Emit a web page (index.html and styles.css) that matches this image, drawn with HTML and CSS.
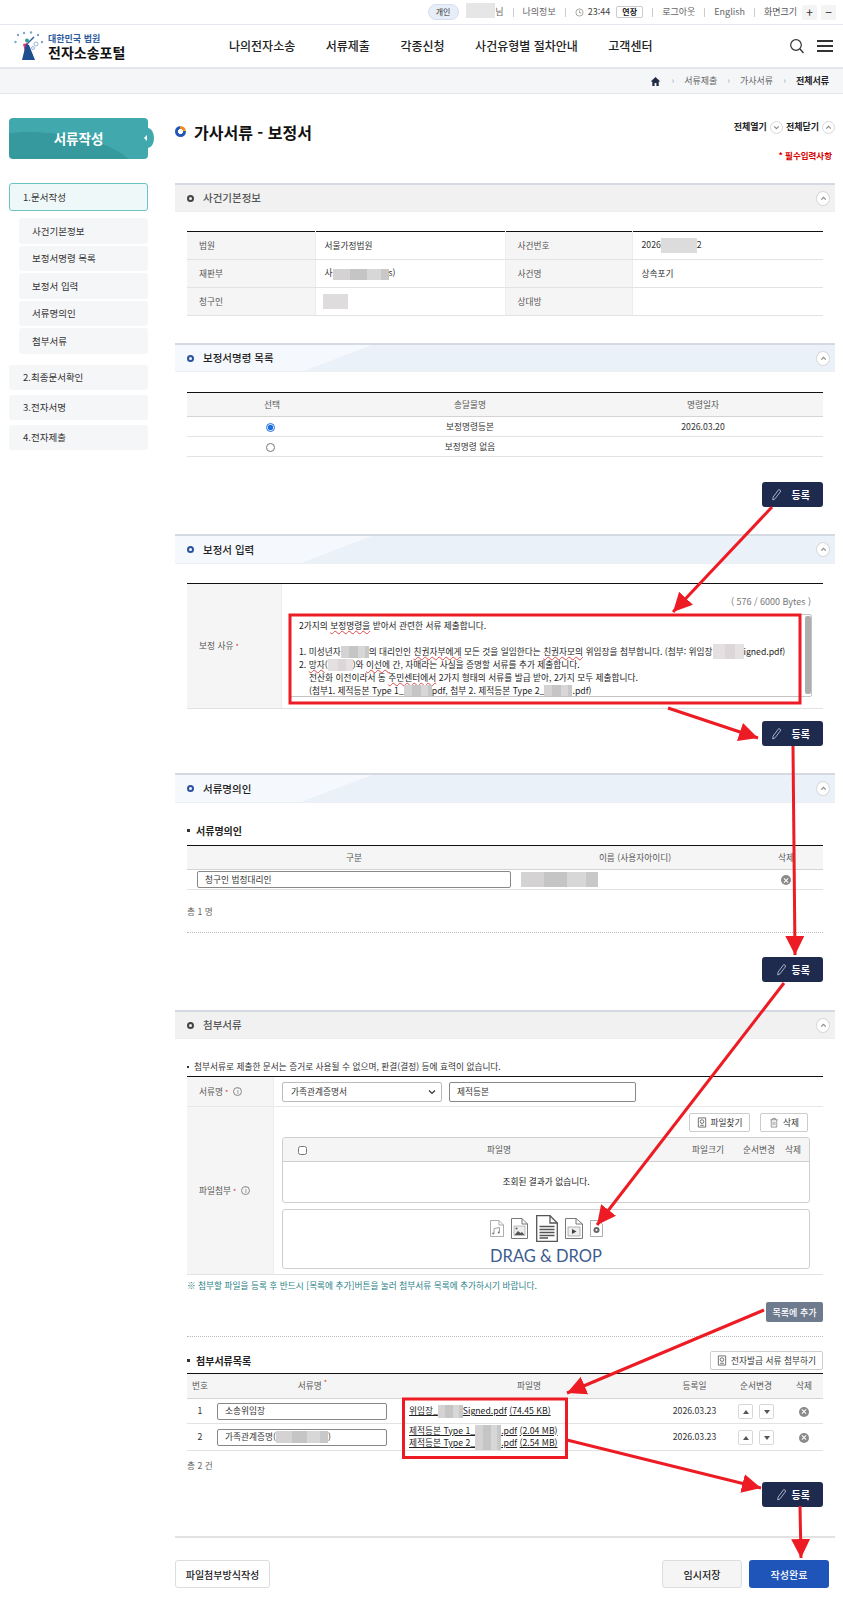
FILE: index.html
```html
<!DOCTYPE html>
<html lang="ko">
<head>
<meta charset="utf-8">
<title>전자소송포털 - 보정서</title>
<link rel="stylesheet" href="styles.css">
</head>
<body>
<div class="topbar">
  <span class="pill">개인</span>
  <span class="blur b-user"></span><span class="nim">님</span>
  <i class="sep"></i><span>나의정보</span><i class="sep"></i>
  <svg class="clock" viewBox="0 0 10 10"><circle cx="5" cy="5" r="4" fill="none" stroke="#888" stroke-width=".8"/><path d="M5 2.6V5.4H7" fill="none" stroke="#888" stroke-width=".8"/></svg>
  <span class="time">23:44</span><span class="extend">연장</span><i class="sep"></i>
  <span>로그아웃</span><i class="sep"></i><span class="eng">English</span><i class="sep"></i>
  <span class="zoomlabel">화면크기</span><span class="zoombtn first">+</span><span class="zoombtn">−</span>
</div>
<header class="header">
  <div class="logo">
    <svg class="logo-mark" viewBox="0 0 30 30">
      <g fill="#7fa6cf"><circle cx="4" cy="4" r="1.2"/><circle cx="10" cy="2" r="1.2"/><circle cx="17" cy="1.5" r="1.2"/><circle cx="24" cy="4" r="1.2"/><circle cx="1.5" cy="11" r="1.2"/><circle cx="28" cy="11" r="1.2"/></g>
      <path d="M20 6 12 14" stroke="#2f5f9e" stroke-width="1.4"/>
      <circle cx="13" cy="9.5" r="2" fill="#2fa08a"/>
      <path d="M9 13 14 12 14 20 11 21Z" fill="#d83a7c"/>
      <path d="M12 13 15 14 21 29H8Z" fill="#1d4f8f"/>
      <g fill="none" stroke="#8fb0d4" stroke-width=".9"><circle cx="22" cy="13" r="2"/><circle cx="19" cy="17" r="1.5"/></g>
    </svg>
    <div class="logo-text"><span class="logo-small">대한민국 법원</span><strong>전자소송포털</strong></div>
  </div>
  <nav class="nav"><a>나의전자소송</a><a>서류제출</a><a>각종신청</a><a>사건유형별 절차안내</a><a>고객센터</a></nav>
  <div class="header-tools">
    <svg class="search" viewBox="0 0 16 16"><circle cx="7" cy="7" r="5.3" fill="none" stroke="#333" stroke-width="1.2"/><path d="M11 11 14.5 15" stroke="#333" stroke-width="1.3"/></svg>
    <div class="burger"><i></i><i></i><i></i></div>
  </div>
</header>
<div class="crumb">
  <svg class="home" viewBox="0 0 12 12"><path d="M6 1 .8 6H2.5V11H5V7.6H7V11H9.5V6H11.2Z" fill="#1f2a44"/></svg>
  <span class="gt">›</span><span>서류제출</span><span class="gt">›</span><span>가사서류</span><span class="gt">›</span><strong>전체서류</strong>
</div>

<div class="layout">
  <aside class="sidebar">
    <div class="side-title">서류작성<i class="notch"></i></div>
    <a class="step step-on">1.문서작성</a>
    <div class="substeps"><a>사건기본정보</a><a>보정서명령 목록</a><a>보정서 입력</a><a>서류명의인</a><a>첨부서류</a></div>
    <a class="step step-first">2.최종문서확인</a>
    <a class="step">3.전자서명</a>
    <a class="step">4.전자제출</a>
  </aside>

  <main class="content">
    <div class="page-head">
      <div class="page-row">
        <h1><i class="ring"></i>가사서류 - 보정서</h1>
        <div class="all-tools">
          <span>전체열기</span><i class="round"><svg viewBox="0 0 8 8"><path d="M2 3 4 5 6 3" fill="none" stroke="#888"/></svg></i>
          <span>전체닫기</span><i class="round"><svg viewBox="0 0 8 8"><path d="M2 5 4 3 6 5" fill="none" stroke="#888"/></svg></i>
        </div>
      </div>
      <p class="required">* 필수입력사항</p>
    </div>

    <section>
      <div class="sec-head grey short"><i class="dot"></i><h2>사건기본정보</h2><i class="round sec-toggle"><svg viewBox="0 0 8 8"><path d="M2 5 4 3 6 5" fill="none" stroke="#888"/></svg></i></div>
      <div class="sec-body pad-19">
        <table class="tbl info">
          <colgroup><col class="c128"><col class="c190"><col class="c127"><col></colgroup>
          <tr><th>법원</th><td>서울가정법원</td><th>사건번호</th><td>2026<span class="blur b-36"></span>2</td></tr>
          <tr><th>재판부</th><td>사<span class="blur b-56"></span>s)</td><th>사건명</th><td>상속포기</td></tr>
          <tr><th>청구인</th><td><span class="blur b-claim"></span></td><th>상대방</th><td></td></tr>
        </table>
      </div>
    </section>

    <section class="gap-27">
      <div class="sec-head blue short"><i class="dot navy"></i><h2>보정서명령 목록</h2><i class="round sec-toggle"><svg viewBox="0 0 8 8"><path d="M2 5 4 3 6 5" fill="none" stroke="#888"/></svg></i></div>
      <div class="sec-body pad-20">
        <table class="tbl center orders">
          <colgroup><col class="c170"><col class="c226"><col></colgroup>
          <tr class="hd"><th>선택</th><th>송달물명</th><th>명령일자</th></tr>
          <tr><td><input class="radio" type="radio" name="o" checked></td><td>보정명령등본</td><td>2026.03.20</td></tr>
          <tr><td><input class="radio" type="radio" name="o"></td><td>보정명령 없음</td><td></td></tr>
        </table>
        <div class="act act-25"><button class="reg wide"><svg class="pen" viewBox="0 0 12 14"><path d="M8.5 1.5 10.8 3.2 4.5 11.6 2 13 2.2 9.9Z" fill="none" stroke="#c8cede" stroke-width=".9"/></svg>등록</button></div>
      </div>
    </section>

    <section class="gap-27">
      <div class="sec-head blue"><i class="dot navy"></i><h2>보정서 입력</h2><i class="round sec-toggle"><svg viewBox="0 0 8 8"><path d="M2 5 4 3 6 5" fill="none" stroke="#888"/></svg></i></div>
      <div class="sec-body pad-19">
        <div class="reason">
          <div class="reason-label">보정 사유<sup>*</sup></div>
          <div class="reason-body">
            <div class="bytes">( 576 / 6000 Bytes )</div>
            <div class="textarea">
              <p>2가지의 <u>보정명령을</u> 받아서 관련한 서류 제출합니다.</p>
              <p>&nbsp;</p>
              <p>1. 미성년자<span class="blur b-28"></span>의 대리인인 <u>친권자부에게</u> 모든 것을 일임한다는 <u>친권자모의</u> 위임장을 첨부합니다. (첨부: 위임장<span class="blur b-31 pale"></span>igned.pdf)</p>
              <p>2. <u>망자</u>(<span class="blur b-24 pale"></span>)와 <u>이선에</u> 간, 자매라는 사실을 증명할 서류를 추가 제출합니다.</p>
              <p class="indent">전산화 이전이라서 동 <u>주민센터에서</u> 2가지 형태의 서류를 발급 받아, 2가지 모두 제출합니다.</p>
              <p class="indent">(<u>첨부1.</u> <u>제적등본</u> Type 1_<span class="blur b-28"></span>pdf, 첨부 2. <u>제적등본</u> Type 2_<span class="blur b-28"></span>.pdf)</p>
              <i class="scroll"></i>
            </div>
          </div>
        </div>
        <div class="act act-12"><button class="reg wide"><svg class="pen" viewBox="0 0 12 14"><path d="M8.5 1.5 10.8 3.2 4.5 11.6 2 13 2.2 9.9Z" fill="none" stroke="#c8cede" stroke-width=".9"/></svg>등록</button></div>
      </div>
    </section>

    <section class="gap-27">
      <div class="sec-head blue"><i class="dot navy"></i><h2>서류명의인</h2><i class="round sec-toggle"><svg viewBox="0 0 8 8"><path d="M2 5 4 3 6 5" fill="none" stroke="#888"/></svg></i></div>
      <div class="sec-body">
        <h3 class="sub sub-owner"><i></i>서류명의인</h3>
        <table class="tbl center owners">
          <colgroup><col class="c334"><col class="c228"><col></colgroup>
          <tr class="hd"><th>구분</th><th>이름 (사용자아이디)</th><th>삭제</th></tr>
          <tr><td class="cell-field"><div class="field f-owner">청구인 법정대리인</div></td><td class="left-top"><span class="blur b-owner"></span></td><td><i class="del"></i></td></tr>
        </table>
        <p class="total t-owner">총 1 명</p>
        <div class="dots"></div>
        <div class="act act-24"><button class="reg"><svg class="pen" viewBox="0 0 12 14"><path d="M8.5 1.5 10.8 3.2 4.5 11.6 2 13 2.2 9.9Z" fill="none" stroke="#c8cede" stroke-width=".9"/></svg>등록</button></div>
      </div>
    </section>

    <section class="gap-28">
      <div class="sec-head grey short"><i class="dot"></i><h2>첨부서류</h2><i class="round sec-toggle"><svg viewBox="0 0 8 8"><path d="M2 5 4 3 6 5" fill="none" stroke="#888"/></svg></i></div>
      <div class="sec-body">
        <p class="note"><i></i>첨부서류로 제출한 문서는 증거로 사용될 수 없으며, 판결(결정) 등에 효력이 없습니다.</p>
        <div class="attach">
          <div class="a-row a-name">
            <div class="a-label">서류명<sup>*</sup><i class="info-i">i</i></div>
            <div class="a-cell">
              <div class="field f-select">가족관계증명서<svg viewBox="0 0 8 6"><path d="M1 1.5 4 4.5 7 1.5" fill="none" stroke="#333" stroke-width="1.2"/></svg></div>
              <div class="field f-doc">제적등본</div>
            </div>
          </div>
          <div class="a-row a-file">
            <div class="a-label">파일첨부<sup>*</sup><i class="info-i">i</i></div>
            <div class="a-files">
              <div class="file-btns">
                <button class="ghost b-find"><svg viewBox="0 0 10 12"><path d="M1 1H9V11H1Z" fill="none" stroke="#666"/><circle cx="5" cy="5" r="2" fill="none" stroke="#666"/><path d="M3 9H7" stroke="#666"/></svg>파일찾기</button>
                <button class="ghost b-del"><svg viewBox="0 0 10 12"><path d="M1 3H9M3.5 3V1.5H6.5V3M2 3V11H8V3M4 5V9M6 5V9" fill="none" stroke="#777" stroke-width=".8"/></svg>삭제</button>
              </div>
              <div class="file-list">
                <div class="file-head"><span><input class="check" type="checkbox"></span><span>파일명</span><span>파일크기</span><span>순서변경</span><span>삭제</span></div>
                <div class="file-empty">조회된 결과가 없습니다.</div>
              </div>
              <div class="drop">
                <svg class="drop-icons" viewBox="0 0 113 28">
                  <g fill="#fff" stroke="#999" stroke-width=".8">
                    <path d="M.5 5.5H9L13.5 10V21.5H.5Z"/>
                    <path d="M9 5.5V10H13.5" fill="none"/>
                  </g>
                  <path d="M4 18.5V13.5L9.5 12.5V17.5" fill="none" stroke="#777" stroke-width=".7"/>
                  <circle cx="3.2" cy="18.5" r="1" fill="#777"/><circle cx="8.7" cy="17.5" r="1" fill="#777"/>
                  <g fill="#fff" stroke="#777" stroke-width="1">
                    <path d="M21.5 3.5H32L37.5 9V23.5H21.5Z"/>
                    <path d="M32 3.5V9H37.5" fill="none"/>
                    <path d="M24 11H35V20.5H24Z" fill="#eee" stroke="#999" stroke-width=".6"/>
                  </g>
                  <path d="M24.5 20 28 16 30.5 18 32 17 34.5 20Z" fill="#555"/>
                  <circle cx="26.5" cy="13.5" r="1" fill="#555"/>
                  <g fill="#fff" stroke="#555" stroke-width="1.3">
                    <path d="M46.7 .7H60L67.3 8V26.3H46.7Z"/>
                    <path d="M60 .7V8H67.3" fill="none"/>
                  </g>
                  <path d="M49.5 11.5H64.5M49.5 14.5H64.5M49.5 17.5H64.5M49.5 20.5H64.5M49.5 23H58" stroke="#555" stroke-width="1.3"/>
                  <g fill="#fff" stroke="#777" stroke-width="1">
                    <path d="M75.5 3.5H86L92.5 9V23.5H75.5Z"/>
                    <path d="M86 3.5V9H92.5" fill="none"/>
                    <path d="M78 12H90V21H78Z" fill="#eee" stroke="#888" stroke-width=".6"/>
                  </g>
                  <path d="M82 14V19L86.5 16.5Z" fill="#444"/>
                  <g fill="#fff" stroke="#999" stroke-width=".8">
                    <path d="M100.5 5.5H108.5L112.5 9.5V21.5H100.5Z"/>
                  </g>
                  <circle cx="106.5" cy="15" r="3" fill="#666"/><circle cx="106.5" cy="15" r="1" fill="#fff"/>
                </svg>
                <div class="drag-text">DRAG &amp; DROP</div>
              </div>
            </div>
          </div>
        </div>
        <p class="teal-note">※ 첨부할 파일을 등록 후 반드시 [목록에 추가]버튼을 눌러 첨부서류 목록에 추가하시기 바랍니다.</p>
        <div class="act act-add"><button class="add">목록에 추가</button></div>
        <div class="dots d-14"></div>
        <div class="list-head">
          <h3 class="sub"><i></i>첨부서류목록</h3>
          <button class="ghost b-issue"><svg viewBox="0 0 10 12"><path d="M1 1H9V11H1Z" fill="none" stroke="#666"/><circle cx="5" cy="5" r="2" fill="none" stroke="#666"/><path d="M3 9H7" stroke="#666"/></svg>전자발급 서류 첨부하기</button>
        </div>
        <table class="tbl center docs">
          <colgroup><col class="c26"><col class="c183"><col class="c266"><col class="c65"><col class="c58"><col></colgroup>
          <tr class="hd"><th>번호</th><th class="pl16">서류명<sup>*</sup></th><th>파일명</th><th>등록일</th><th>순서변경</th><th>삭제</th></tr>
          <tr>
            <td>1</td>
            <td class="cell-doc"><div class="field f-list">소송위임장</div></td>
            <td class="files"><a>위임장_<span class="blur b-24"></span>Signed.pdf</a> <a>(74.45 KB)</a></td>
            <td>2026.03.23</td>
            <td><span class="order up"></span><span class="order down"></span></td>
            <td><i class="del"></i></td>
          </tr>
          <tr>
            <td>2</td>
            <td class="cell-doc"><div class="field f-list">가족관계증명(<span class="blur b-52"></span>)</div></td>
            <td class="files two"><div><a>제적등본 Type 1_<span class="blur b-26"></span>.pdf</a> <a>(2.04 MB)</a></div><div><a>제적등본 Type 2_<span class="blur b-26"></span>.pdf</a> <a>(2.54 MB)</a></div></td>
            <td>2026.03.23</td>
            <td><span class="order up"></span><span class="order down"></span></td>
            <td><i class="del"></i></td>
          </tr>
        </table>
        <p class="total t-docs">총 2 건</p>
        <div class="act act-last"><button class="reg"><svg class="pen" viewBox="0 0 12 14"><path d="M8.5 1.5 10.8 3.2 4.5 11.6 2 13 2.2 9.9Z" fill="none" stroke="#c8cede" stroke-width=".9"/></svg>등록</button></div>
      </div>
    </section>

    <div class="foot">
      <button class="foot-btn foot-file">파일첨부방식작성</button>
      <div class="foot-right">
        <button class="foot-btn foot-save">임시저장</button>
        <button class="foot-btn foot-done">작성완료</button>
      </div>
    </div>
  </main>
</div>

<svg class="marks" viewBox="0 0 843 1600">
  <defs>
    <marker id="head" markerUnits="userSpaceOnUse" markerWidth="22" markerHeight="20" refX="19" refY="9.5" orient="auto">
      <path d="M0 0 19 9.5 0 19Z" fill="#ed1c24"/>
    </marker>
  </defs>
  <g fill="none" stroke="#ed1c24" stroke-width="3">
    <rect x="290" y="615" width="510" height="88"/>
    <rect x="403.5" y="1399" width="163" height="58.5"/>
    <path d="M772 507 673 612" marker-end="url(#head)"/>
    <path d="M668 708 758 738" marker-end="url(#head)"/>
    <path d="M793 746 795 955" marker-end="url(#head)"/>
    <path d="M784 983 597 1225" marker-end="url(#head)"/>
    <path d="M764 1310 567 1393" marker-end="url(#head)"/>
    <path d="M567 1440 761 1488" marker-end="url(#head)"/>
    <path d="M800 1506 801 1558" marker-end="url(#head)"/>
  </g>
</svg>
</body>
</html>
```

FILE: styles.css
```css
* { box-sizing: border-box; }
html, body { margin: 0; padding: 0; }
body {
  position: relative;
  width: 843px;
  height: 1600px;
  overflow: hidden;
  background: #fff;
  color: #333;
  font-family: "Noto Sans CJK KR", "Noto Sans", sans-serif;
  font-size: 8.7px;
  line-height: 1.3;
}
a { color: inherit; }
i { font-style: normal; }
p, h1, h2, h3 { margin: 0; }
button { font-family: inherit; cursor: pointer; padding: 0; }
sup { color: #d33; font-size: 7px; line-height: 0; margin-left: 2px; }

/* blurred-out personal data */
.blur {
  display: inline-block;
  height: 11px;
  vertical-align: middle;
  background: linear-gradient(90deg, #d4d2d2 0 30%, #c6c5c5 30% 60%, #d8d7d7 60% 85%, #c8c8c8 85%);
}
.blur.pale { background: linear-gradient(90deg, #e4dfe0 0 40%, #dcd6d8 40% 70%, #e6e2e3 70%); }
.b-user { width: 29px; height: 15px; background: #e6e6e6; margin-top: -4px; }
.b-36 { width: 36px; background: #dcdcdc; height: 15px; }
.b-56 { width: 56px; }
.b-claim { width: 25px; height: 15px; background: #dedcdc; margin-left: -2px; }
.b-28 { width: 28px; height: 12px; }
.b-31 { width: 31px; height: 15px; }
.b-24 { width: 25px; height: 12px; }
.b-26 { width: 26px; height: 13px; }
.b-52 { width: 52px; height: 12px; }
.b-owner { width: 77px; height: 15px; }

/* top bar */
.topbar {
  height: 25px;
  display: flex;
  align-items: center;
  justify-content: flex-end;
  padding-right: 7px;
  border-bottom: 1px solid #e5e7ef;
  color: #666;
  font-size: 9px;
}
.pill {
  width: 31px; height: 16px; margin-right: 7px;
  display: flex; align-items: center; justify-content: center;
  background: #e8eef8; border: 1px solid #d3deee; border-radius: 9px; color: #333; font-size: 8px;
}
.nim { width: 9px; text-align: right; }
.sep { width: 1px; height: 9px; margin: 0 9px; background: #ccc; }
.clock { width: 9px; height: 9px; margin-right: 4px; }
.time { color: #444; }
.extend {
  width: 27px; height: 12px; margin-left: 6px;
  display: flex; align-items: center; justify-content: center;
  border: 1px solid #ccc; border-radius: 2px; color: #222; font-weight: 700; font-size: 8px;
}
.zoomlabel { color: #555; margin-right: 5px; }
.zoombtn {
  width: 15px; height: 15px; margin-left: 4px;
  display: flex; align-items: center; justify-content: center;
  background: #f4f4f4; border-radius: 2px; font-size: 12px; color: #333;
}
.zoombtn.first { margin-left: 0; }

/* header */
.header {
  height: 44px;
  display: flex;
  align-items: center;
  padding: 0 10px 0 14px;
  border-bottom: 2px solid #e4e7ed;
}
.logo { width: 215px; display: flex; align-items: center; gap: 4px; }
.logo-mark { width: 30px; height: 30px; flex: none; }
.logo-text { display: flex; flex-direction: column; line-height: 1; }
.logo-small { color: #2d5b9c; font-size: 9px; font-weight: 700; margin-bottom: 2px; }
.logo-text strong { font-size: 14px; color: #111; font-weight: 700; }
.nav { display: flex; gap: 30.5px; font-size: 12px; font-weight: 500; color: #222; }
.header-tools { margin-left: auto; display: flex; align-items: center; gap: 12px; }
.search { width: 16px; height: 16px; }
.burger { width: 16px; display: flex; flex-direction: column; gap: 3px; }
.burger i { display: block; height: 2px; background: #333; }

/* breadcrumb */
.crumb {
  height: 25px;
  display: flex;
  align-items: center;
  justify-content: flex-end;
  padding-right: 14px;
  gap: 9px;
  background: #f5f6f8;
  border-bottom: 1px solid #e6e8ec;
  font-size: 9px;
  color: #666;
}
.crumb strong { color: #222; font-weight: 700; }
.home { width: 11px; height: 11px; }
.gt { color: #aaa; font-size: 9px; margin: 0 1px; }

/* page layout */
.layout { display: flex; padding: 24px 0 0 9px; }
.sidebar { width: 139px; flex: none; }
.content { width: 660px; margin-left: 27px; }

/* sidebar */
.side-title {
  position: relative;
  height: 41px;
  margin-bottom: 24px;
  display: flex; align-items: center; justify-content: center;
  border-radius: 4px;
  background: radial-gradient(ellipse 110px 46px at 20px 60px, #35999e 99%, transparent 100%), #41a9ad;
  color: #fff;
  font-size: 13.5px;
  font-weight: 700;
}
.notch {
  position: absolute; right: -6px; top: 10px;
  width: 12px; height: 20px;
  border-radius: 50%;
  background: #41a9ad;
}
.notch::after {
  content: ""; position: absolute; left: 2px; top: 7px;
  border: 3px solid transparent; border-right-color: #fff; border-left-width: 0;
}
.step {
  display: flex; align-items: center;
  height: 25px;
  margin-bottom: 5px;
  padding-left: 14px;
  background: #f5f6f8;
  border-radius: 3px;
  font-size: 9.5px;
  color: #333;
}
.step-on {
  height: 28px; margin-bottom: 7px;
  background: #eef8f8; border: 1px solid #6cc4c8; padding-left: 13px;
}
.step-first { margin-top: 11px; }
.substeps { margin-left: 10px; display: flex; flex-direction: column; gap: 2px; }
.substeps a {
  height: 25.5px; display: flex; align-items: center; padding-left: 13px;
  background: #f5f6f8; border-radius: 3px; font-size: 9.5px;
}

/* page head */
.page-head { height: 65px; }
.page-row { height: 28px; display: flex; justify-content: space-between; align-items: center; }
h1 { display: flex; align-items: center; font-size: 16px; font-weight: 700; color: #111; }
.ring {
  width: 11px; height: 11px; margin-right: 8px;
  border-radius: 50%;
  background:
    radial-gradient(circle, #fff 0 2.3px, transparent 2.7px),
    conic-gradient(#f08a24 0 18%, #e3b92c 18% 25%, #2457b8 25%);
}
.all-tools { display: flex; align-items: center; font-weight: 700; color: #222; font-size: 9px; margin-top: -10px; margin-right: -3px; }
.round {
  width: 13px; height: 13px; flex: none; margin: 0 3px;
  display: flex; align-items: center; justify-content: center;
  background: #fff; border: 1px solid #d8d8d8; border-radius: 50%;
}
.round svg { width: 9px; height: 9px; }
.required { margin-top: 4px; text-align: right; padding-right: 3px; color: #d40000; font-weight: 700; font-size: 8.5px; }

/* section header */
.sec-head {
  height: 30px;
  display: flex;
  align-items: center;
  padding-left: 12px;
  border-top: 2px solid #d5dae2;
  border-bottom: 1px solid #eceef1;
}
.sec-head.short { height: 29px; }
.grey { background: #f1f1f2; color: #555; }
.blue { background: linear-gradient(159deg, #f5f8fc 70px, #ebf1f8 71px); color: #222; }
h2 { font-size: 10.5px; font-weight: 500; }
.dot {
  width: 7px; height: 7px; margin-right: 9px;
  border: 2px solid #444; border-radius: 50%;
}
.dot.navy { border-color: #2a52a0; }
.sec-toggle { margin: 0 5px 0 auto; width: 14px; height: 15px; }
.sec-body { padding: 0 12px; }
.pad-19 { padding-top: 19px; }
.pad-20 { padding-top: 20px; }
.gap-27 { margin-top: 27px; }
.gap-28 { margin-top: 28px; }

/* tables */
.tbl { width: 100%; table-layout: fixed; border-collapse: collapse; border-top: 1px solid #111; }
.tbl th { font-weight: 400; color: #555; background: #f5f5f5; }
.tbl td { color: #333; }
.tbl th, .tbl td { padding: 0; border-bottom: 1px solid #e2e2e2; }
.c26 { width: 26px; } .c128 { width: 128px; } .c190 { width: 190px; } .c127 { width: 127px; }
.c170 { width: 170px; } .c226 { width: 226px; } .c334 { width: 334px; } .c228 { width: 228px; }
.c183 { width: 183px; } .c266 { width: 266px; } .c65 { width: 65px; } .c58 { width: 58px; }
.info tr { height: 28px; }
.info th { text-align: left; padding-left: 12px; border-right: 1px solid #ececec; }
.info td { padding-left: 9px; border-right: 1px solid #f0f0f0; }
.info td:last-child { border-right: 0; }
.center th, .center td { text-align: center; }
.orders tr { height: 20px; }
.orders .hd { height: 24px; }
.orders .hd th { border-bottom: 1px solid #d4d4d4; }
.radio { width: 9px; height: 9px; margin: 0 4px 0 0; accent-color: #1f6fe0; vertical-align: middle; }

/* action buttons */
.act { display: flex; justify-content: flex-end; }
.act-25 { margin-top: 25px; }
.act-24 { margin-top: 24px; }
.act-12 { margin-top: 12px; }
.reg {
  width: 61px; height: 25px;
  display: flex; align-items: center; justify-content: flex-end;
  padding-right: 13px;
  background: #1e2a4e; border: 0; border-radius: 3px;
  color: #fff; font-size: 10px; font-weight: 700;
}
.pen { width: 11px; height: 13px; margin-right: 5px; }
.reg.wide .pen { margin-right: 10px; }

/* reason */
.reason { display: flex; height: 126px; border-top: 1px solid #111; border-bottom: 1px solid #e2e2e2; }
.reason-label {
  width: 95px; display: flex; align-items: center; padding-left: 12px;
  background: #f5f5f5; color: #555; border-right: 1px solid #ececec;
}
.reason-body { flex: 1; padding: 12px 11px 0 7px; }
.bytes { height: 18px; text-align: right; color: #777; font-size: 9px; padding-right: 1px; }
.textarea {
  position: relative;
  height: 83px;
  overflow: hidden;
  padding: 4px 0 0 9px;
  border: 1px solid #c4c4c4;
  border-radius: 2px;
  font-size: 8.7px;
  line-height: 13px;
  color: #222;
}
.textarea p { white-space: nowrap; height: 13px; }
.textarea .indent { padding-left: 10px; }
.textarea .blur { margin-top: -2px; }
.textarea u { text-decoration: underline wavy #e04848 1px; text-underline-offset: 1px; }
.scroll { position: absolute; right: 0; top: 1px; width: 6px; height: 78px; background: #aeaeae; border-radius: 2px; }

/* owner */
.sub { display: flex; align-items: center; font-size: 10px; font-weight: 700; color: #222; }
.sub i { width: 3px; height: 3px; margin-right: 6px; background: #333; }
.sub-owner { height: 12px; margin: 21px 0 9px; }
.owners tr { height: 20px; }
.owners .hd { height: 24px; }
.owners .hd th { border-bottom: 1px solid #d4d4d4; }
.field {
  height: 17px;
  display: flex; align-items: center;
  padding-left: 7px;
  background: #fff;
  border: 1px solid #888;
  border-radius: 2px;
  color: #333;
  text-align: left;
  white-space: nowrap;
}
.cell-field { padding-left: 10px !important; }
.f-owner { width: 314px; }
.left-top { text-align: left !important; vertical-align: top; padding-top: 2px !important; }
.del {
  position: relative; display: inline-block;
  width: 10px; height: 10px; border-radius: 50%; background: #8a8a8a; vertical-align: middle;
}
.del::before, .del::after {
  content: ""; position: absolute; left: 2px; top: 4.5px; width: 6px; height: 1px; background: #fff;
}
.del::before { transform: rotate(45deg); }
.del::after { transform: rotate(-45deg); }
.total { color: #666; }
.t-owner { margin-top: 16px; height: 12px; }
.dots { border-top: 1px dotted #bbb; }
.t-owner + .dots { margin-top: 14px; }

/* attachments */
.note { display: flex; align-items: center; height: 12px; margin: 22px 0 3px; color: #333; }
.note i { width: 2px; height: 2px; margin-right: 5px; background: #333; }
.attach { border-top: 1px solid #111; border-bottom: 1px solid #e2e2e2; }
.a-row { display: flex; }
.a-name { height: 30px; border-bottom: 1px solid #e8e8e8; }
.a-file { height: 167px; }
.a-label {
  width: 87px; flex: none;
  display: flex; align-items: center; padding-left: 12px;
  background: #f5f5f5; color: #555; border-right: 1px solid #ececec;
}
.info-i {
  width: 9px; height: 9px; margin-left: 5px;
  display: flex; align-items: center; justify-content: center;
  border: 1px solid #888; border-radius: 50%; font-size: 6px; line-height: 1; color: #666;
}
.a-cell { display: flex; align-items: center; gap: 7px; padding-left: 8px; }
.f-select { width: 160px; height: 20px; justify-content: space-between; padding: 0 5px 0 8px; border-color: #bbb; }
.f-select svg { width: 8px; height: 6px; }
.f-doc { width: 187px; height: 20px; border-color: #888; }
.a-files { flex: 1; padding: 6px 13px 0 8px; }
.file-btns { display: flex; justify-content: flex-end; gap: 10px; padding-right: 2px; margin-bottom: 5px; }
.ghost {
  height: 19px; display: flex; align-items: center; justify-content: center; gap: 4px;
  background: #fff; border: 1px solid #ccc; border-radius: 2px; color: #333; font-size: 8.7px;
}
.ghost svg { width: 10px; height: 11px; }
.b-find { width: 61px; }
.b-del { width: 48px; }
.file-list { border: 1px solid #cfcfcf; border-radius: 3px; height: 66px; overflow: hidden; }
.file-head {
  height: 24px;
  display: grid;
  grid-template-columns: 39px 354px 64px 38px 30px;
  align-items: center;
  text-align: center;
  background: #f5f5f5;
  border-bottom: 1px solid #cfcfcf;
  color: #555;
}
.check { width: 9px; height: 9px; margin: 0; vertical-align: middle; }
.file-empty { height: 40px; display: flex; align-items: center; justify-content: center; color: #222; }
.drop {
  height: 60px; margin-top: 6px;
  display: flex; flex-direction: column; align-items: center;
  padding-top: 5px;
  border: 1px solid #cfcfcf; border-radius: 3px;
}
.drop-icons { width: 113px; height: 28px; flex: none; }
.drag-text { font-family: Lato, sans-serif; font-size: 16.5px; line-height: 20px; color: #3d5c8d; margin-top: 3px; }
.teal-note { height: 12px; margin-top: 5px; color: #1f7f86; }
.act-add { margin-top: 10px; }
.add { width: 57px; height: 20px; background: #6e7a8e; border: 0; border-radius: 2px; color: #fff; font-size: 9px; font-weight: 500; }
.d-14 { margin-top: 14px; }
.list-head { display: flex; align-items: center; justify-content: space-between; height: 18px; margin: 14px 0 4px; }
.b-issue { width: 113px; }
.docs tr { height: 25px; }
.docs .hd th { border-bottom: 1px solid #d4d4d4; }
.docs tr:last-child { height: 27px; }
.pl16 { padding-left: 16px !important; }
.cell-doc { text-align: left !important; padding-left: 4px !important; }
.f-list { width: 170px; }
.files { text-align: left !important; padding-left: 13px !important; white-space: nowrap; }
.files a { text-decoration: underline; color: #222; }
.files .blur { height: 13px; margin: -2px 0; }
.files.two { line-height: 12.5px; }
.order {
  display: inline-block; position: relative;
  width: 15px; height: 15px; margin: 0 3px;
  border: 1px solid #d8d8d8; border-radius: 2px; background: #fff; vertical-align: middle;
}
.order::after { content: ""; position: absolute; left: 3.5px; border: 3px solid transparent; }
.up::after { top: 2px; border-bottom: 4px solid #555; }
.down::after { top: 5px; border-top: 4px solid #555; }
.t-docs { margin-top: 9px; height: 12px; }
.act-last { margin-top: 10px; }

/* footer */
.foot {
  display: flex; justify-content: space-between;
  margin-top: 29px; padding-top: 22px;
  border-top: 2px solid #e2e2e2;
}
.foot-right { display: flex; gap: 7px; margin-right: 6px; }
.foot-btn { height: 28px; border-radius: 3px; font-size: 10px; font-weight: 500; }
.foot-file { width: 95px; background: #fff; border: 1px solid #ddd; color: #222; }
.foot-save { width: 80px; background: #f5f5f5; border: 1px solid #ddd; color: #222; }
.foot-done { width: 80px; background: #1f55b8; border: 0; color: #fff; }

/* annotation layer drawn over the page */
.marks { position: absolute; left: 0; top: 0; width: 843px; height: 1600px; pointer-events: none; }
```
